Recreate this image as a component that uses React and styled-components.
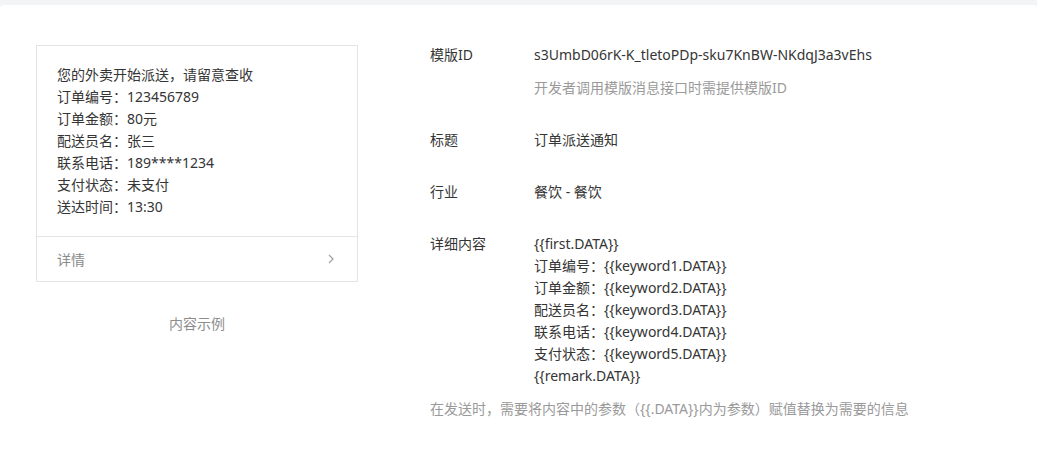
import styled, { createGlobalStyle } from "styled-components";

const GlobalStyle = createGlobalStyle`
  html, body {
    margin: 0;
    padding: 0;
    background: #f3f4f6;
  }
  body {
    font-family: "Noto Sans", "Noto Sans CJK SC", sans-serif;
    font-size: 14px;
    color: #353535;
  }
`;

const Panel = styled.div`
  margin-top: 5px;
  background: #fff;
  border-radius: 4px 4px 0 0;
  height: 448px;
  display: flex;
  align-items: flex-start;
  padding-left: 36px;
  box-sizing: border-box;
`;

const PreviewColumn = styled.div`
  width: 322px;
  margin-top: 40px;
  display: flex;
  flex-direction: column;
`;

const Card = styled.div`
  border: 1px solid #e4e4e4;
`;

const CardBody = styled.div`
  padding: 18px 20px;
  line-height: 22px;
`;

const CardFooter = styled.div`
  border-top: 1px solid #e4e4e4;
  height: 44px;
  padding: 0 20px;
  display: flex;
  align-items: center;
  justify-content: space-between;
  color: #8a8a8a;
`;

const Arrow = styled.svg`
  width: 8px;
  height: 10px;
  margin-right: 2px;
`;

const Caption = styled.div`
  margin-top: 31px;
  text-align: center;
  color: #8d8d8d;
  line-height: 22px;
`;

const InfoColumn = styled.div`
  margin-left: 72px;
  margin-top: 39px;
  display: flex;
  flex-direction: column;
  gap: 30px;
  line-height: 22px;
`;

const Row = styled.div`
  display: flex;
`;

const Label = styled.div`
  width: 104px;
  flex-shrink: 0;
`;

const Value = styled.div`
  display: flex;
  flex-direction: column;
`;

const Hint = styled.div`
  margin-top: 11px;
  color: #9a9a9a;
`;

const Note = styled.div`
  margin-top: -19px;
  color: #9a9a9a;
`;

const previewLines = [
  "您的外卖开始派送，请留意查收",
  "订单编号：123456789",
  "订单金额：80元",
  "配送员名：张三",
  "联系电话：189****1234",
  "支付状态：未支付",
  "送达时间：13:30",
];

const detailLines = [
  "{{first.DATA}}",
  "订单编号：{{keyword1.DATA}}",
  "订单金额：{{keyword2.DATA}}",
  "配送员名：{{keyword3.DATA}}",
  "联系电话：{{keyword4.DATA}}",
  "支付状态：{{keyword5.DATA}}",
  "{{remark.DATA}}",
];

const App = () => {
  return (
    <>
      <GlobalStyle />
      <Panel>
        <PreviewColumn>
          <Card>
            <CardBody>
              {previewLines.map((line) => (
                <div key={line}>{line}</div>
              ))}
            </CardBody>
            <CardFooter>
              <span>详情</span>
              <Arrow viewBox="0 0 8 10">
                <path d="M2 1 L6 5 L2 9" fill="none" stroke="#a0a0a0" strokeWidth="1.2" />
              </Arrow>
            </CardFooter>
          </Card>
          <Caption>内容示例</Caption>
        </PreviewColumn>
        <InfoColumn>
          <Row>
            <Label>模版ID</Label>
            <Value>
              <div>s3UmbD06rK-K_tletoPDp-sku7KnBW-NKdqJ3a3vEhs</div>
              <Hint>开发者调用模版消息接口时需提供模版ID</Hint>
            </Value>
          </Row>
          <Row>
            <Label>标题</Label>
            <Value>订单派送通知</Value>
          </Row>
          <Row>
            <Label>行业</Label>
            <Value>餐饮 - 餐饮</Value>
          </Row>
          <Row>
            <Label>详细内容</Label>
            <Value>
              {detailLines.map((line) => (
                <div key={line}>{line}</div>
              ))}
            </Value>
          </Row>
          <Note>在发送时，需要将内容中的参数（{"{{.DATA}}"}内为参数）赋值替换为需要的信息</Note>
        </InfoColumn>
      </Panel>
    </>
  );
};

export default App;
